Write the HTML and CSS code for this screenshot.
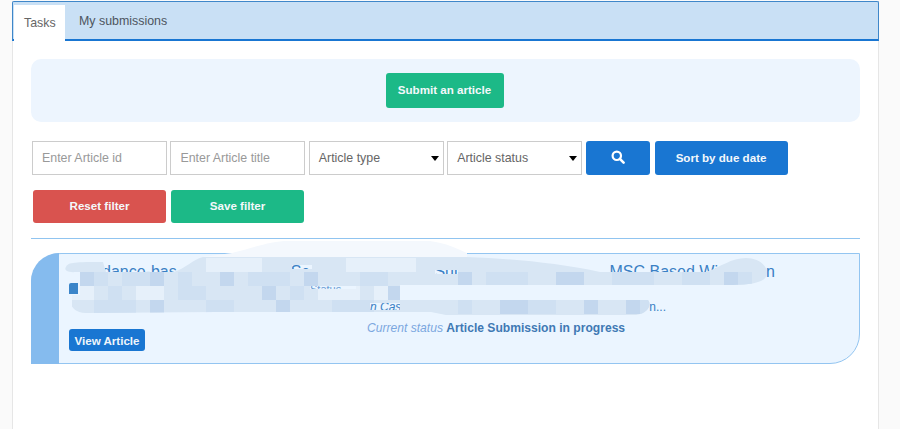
FILE: index.html
```html
<!DOCTYPE html>
<html lang="en">
<head>
<meta charset="utf-8">
<title>Tasks</title>
<link rel="stylesheet" href="styles.css">
</head>
<body>
<main class="panel">
  <nav class="tabs">
    <a class="tab tab-active">Tasks</a>
    <a class="tab tab-plain">My submissions</a>
  </nav>
  <section class="content">
    <div class="hero"><button class="btn btn-green btn-submit">Submit an article</button></div>
    <div class="filters">
      <input class="field" placeholder="Enter Article id">
      <input class="field" placeholder="Enter Article title">
      <div class="field select">Article type<i class="caret"></i></div>
      <div class="field select">Article status<i class="caret"></i></div>
      <button class="btn btn-blue btn-search" aria-label="Search">
        <svg width="14" height="14" viewBox="0 0 14 14"><circle cx="5.8" cy="5.8" r="4.2" fill="none" stroke="#fff" stroke-width="2.2"/><path d="M8.9 8.9 12.6 12.6" stroke="#fff" stroke-width="2.6" stroke-linecap="round"/></svg>
      </button>
      <button class="btn btn-blue btn-sort">Sort by due date</button>
    </div>
    <div class="actions">
      <button class="btn btn-red btn-action">Reset filter</button>
      <button class="btn btn-green btn-action">Save filter</button>
    </div>
    <hr class="rule">
    <article class="card">
      <div class="card-bar"></div>
      <div class="card-body">
        <h2 class="card-title"><span class="t1">dance-bas</span><span class="t2">Sc</span><span class="t3">Sui</span><span class="t4">MSC Based Wi</span><span class="t5">n</span></h2>
        <div class="card-line"><i class="doc"></i><span class="card-type">Status</span></div>
        <p class="card-authors"><span class="a1">n Cas</span><span class="a2">n...</span></p>
        <p class="card-status"><em>Current status</em> <strong>Article Submission in progress</strong></p>
        <button class="btn btn-view">View Article</button>
      </div>
      <svg class="smear" width="760" height="86" viewBox="0 0 760 86" aria-hidden="true">
        <defs>
          <clipPath id="blob">
            <path clip-rule="evenodd" d="M0 22C2 17 10 17 37 17L40 27H108C118 24 128 14 137 12H400C450 14 490 18 534 27H640C655 22 665 13 680 13C692 13 701 20 701 28C701 36 690 40 667 40H334V55H582C586 60 582 68 570 70H380L365 67H150L20 68C8 68 6 60 6 62V50H14V27H10C0 28 -2 24 0 22ZM226 20H246V24H226ZM369 25H392V29H369ZM244 41H290V44H244ZM304 58H334V65H304Z"/>
          </clipPath>
        </defs>
        <path class="smear-fade" d="M166 8C190 2 205 -4 222 -4H364C380 -2 392 4 401 8V12H137Z"/>
        <g clip-path="url(#blob)">
          <rect class="m0" x="-4" y="0" width="760" height="86"/>
          <g class="m1" transform="translate(0 3)">
            <rect x="28" y="24" width="14" height="14"/><rect x="56" y="24" width="28" height="14"/><rect x="112" y="24" width="14" height="14"/><rect x="182" y="24" width="42" height="14"/><rect x="294" y="24" width="28" height="14"/><rect x="420" y="24" width="42" height="14"/><rect x="546" y="24" width="42" height="14"/><rect x="616" y="24" width="28" height="14"/><rect x="672" y="24" width="14" height="14"/>
            <rect x="42" y="38" width="14" height="14"/><rect x="112" y="38" width="28" height="14"/><rect x="224" y="38" width="14" height="14"/>
            <rect x="28" y="52" width="42" height="14"/><rect x="140" y="52" width="28" height="14"/><rect x="266" y="52" width="42" height="14"/><rect x="392" y="52" width="14" height="14"/><rect x="462" y="52" width="28" height="14"/><rect x="574" y="52" width="28" height="14"/>
          </g>
          <g class="m2" transform="translate(0 3)">
            <rect x="14" y="24" width="14" height="14"/><rect x="84" y="24" width="14" height="14"/><rect x="154" y="24" width="14" height="14"/><rect x="238" y="24" width="14" height="14"/><rect x="392" y="24" width="14" height="14"/><rect x="490" y="24" width="28" height="14"/><rect x="658" y="24" width="14" height="14"/>
            <rect x="196" y="38" width="14" height="14"/><rect x="322" y="38" width="14" height="14"/>
            <rect x="84" y="52" width="14" height="14"/><rect x="210" y="52" width="14" height="14"/><rect x="434" y="52" width="28" height="14"/><rect x="518" y="52" width="14" height="14"/><rect x="560" y="52" width="14" height="14"/>
          </g>
          <g class="m3" transform="translate(0 3)">
            <rect x="0" y="38" width="28" height="14"/><rect x="70" y="38" width="28" height="14"/><rect x="252" y="38" width="42" height="14"/><rect x="308" y="38" width="14" height="14"/>
            <rect x="140" y="10" width="56" height="14"/><rect x="280" y="10" width="70" height="14"/>
          </g>
        </g>
      </svg>
    </article>
  </section>
</main>
</body>
</html>
```
FILE: styles.css
```css
* { box-sizing: border-box; }
html, body { height: 100%; }
body {
  margin: 0;
  overflow: hidden;
  background: #fafafa;
  font-family: "Liberation Sans", Arial, sans-serif;
  color: #555;
}
.panel {
  width: 867px;
  height: 429px;
  margin: 1px 0 0 12px;
  background: #fff;
  border-left: 1px solid #e6e6e6;
  border-right: 1px solid #e6e6e6;
}
.tabs {
  display: flex;
  height: 40px;
  padding: 3px 0 0 1px;
  margin: 0 -1px 0 -1px;
  background: #c9e0f5;
  border: 1px solid #3f87c9;
  border-bottom: 2px solid #1976d2;
  border-radius: 2px 2px 0 0;
}
.tab {
  font-size: 12.4px;
  line-height: 32px;
  color: #4d5560;
}
.tab-plain { padding-left: 14px; }
.tab-active {
  width: 51px;
  height: 37px;
  padding: 2px 0 0 10px;
  background: #fff;
  color: #666;
}
.content { padding: 18px 18px 0 18px; }
.hero {
  display: flex;
  justify-content: center;
  align-items: center;
  height: 63px;
  padding-right: 2px;
  background: #edf5fe;
  border-radius: 10px;
}
.btn {
  padding: 0 0 2px;
  border: 0;
  border-radius: 3px;
  color: #f4f8fb;
  font: bold 11.6px "Liberation Sans", Arial, sans-serif;
}
.btn-green { background: #1cb987; }
.btn-blue { background: #1976d2; }
.btn-red { background: #d9534f; }
.btn-submit { width: 118px; height: 35px; }
.filters {
  display: flex;
  gap: 3.4px;
  height: 34px;
  margin: 19px 0 0 1px;
}
.field {
  width: 135px;
  height: 34px;
  padding: 0 9px;
  background: #fff;
  border: 1px solid #ccc;
  font: 12.4px "Liberation Sans", Arial, sans-serif;
  color: #666;
  outline: 0;
}
.field::placeholder { color: #999; opacity: 1; }
.select {
  display: flex;
  align-items: center;
  justify-content: space-between;
  padding-right: 4px;
}
.caret {
  border-left: 4px solid transparent;
  border-right: 4px solid transparent;
  border-top: 5px solid #000;
}
.btn-search {
  display: flex;
  align-items: center;
  justify-content: center;
  width: 64px;
  height: 34px;
}
.btn-sort { width: 133px; height: 34px; margin-left: 1.6px; }
.actions {
  display: flex;
  gap: 5px;
  margin: 15px 0 0 2px;
}
.btn-action { width: 133px; height: 33px; }
.rule {
  height: 1px;
  margin: 15px 0 0 0;
  border: 0;
  background: #90c4f0;
}
.card {
  position: relative;
  display: flex;
  height: 111px;
  margin-top: 14px;
  background: #ebf5ff;
  border: 1px solid #93c5f1;
  border-radius: 30px 0 30px 0;
}
.card-bar {
  flex: none;
  width: 28px;
  margin: -1px 0 -1px -1px;
  background: #85bbee;
  border-radius: 30px 0 0 0;
}
.card-body {
  flex: 1;
  min-width: 0;
  padding: 9px 0 0 10px;
  color: #3a80c4;
}
.card-title {
  display: flex;
  height: 18px;
  margin: 0;
  font-size: 16px;
  font-weight: 400;
  line-height: 18px;
  white-space: nowrap;
}
.t1 { margin-left: 33px; }
.t2 { margin-left: 114px; }
.t3 { margin-left: 125px; }
.t4 { margin-left: 152px; }
.t5 { margin-left: 48px; }
.card-line {
  display: flex;
  align-items: center;
  height: 11px;
  margin-top: 2px;
}
.doc {
  flex: none;
  width: 9px;
  height: 11px;
  background: #3b85c9;
  border-radius: 2px 0 0 0;
}
.card-type {
  margin-left: 232px;
  font-size: 11px;
  line-height: 12px;
  color: #6d9fd6;
}
.card-authors {
  display: flex;
  height: 14px;
  margin: 6px 0 0 0;
  font-size: 12px;
  line-height: 14px;
  white-space: nowrap;
}
.a1 { margin-left: 301px; font-style: italic; }
.a2 { margin-left: 248px; }
.card-status {
  margin: 7px 0 0 298px;
  font-size: 12.1px;
  line-height: 14px;
  white-space: nowrap;
}
.card-status em { color: #7ba7e0; }
.card-status strong { color: #4079b4; }
.btn-view {
  display: block;
  width: 76px;
  height: 22px;
  margin-top: -6px;
  padding: 1px 0 0;
  background: #1976d2;
  color: #eef5fb;
}
.smear {
  position: absolute;
  left: 34px;
  top: -9px;
  overflow: visible;
  pointer-events: none;
}
.smear-fade { fill: #f4f8fd; }
.m0 { fill: #d8e6f4; }
.m1 { fill: #cfe0f2; }
.m2 { fill: #c3d7ee; }
.m3 { fill: #e6f0fa; }
```
